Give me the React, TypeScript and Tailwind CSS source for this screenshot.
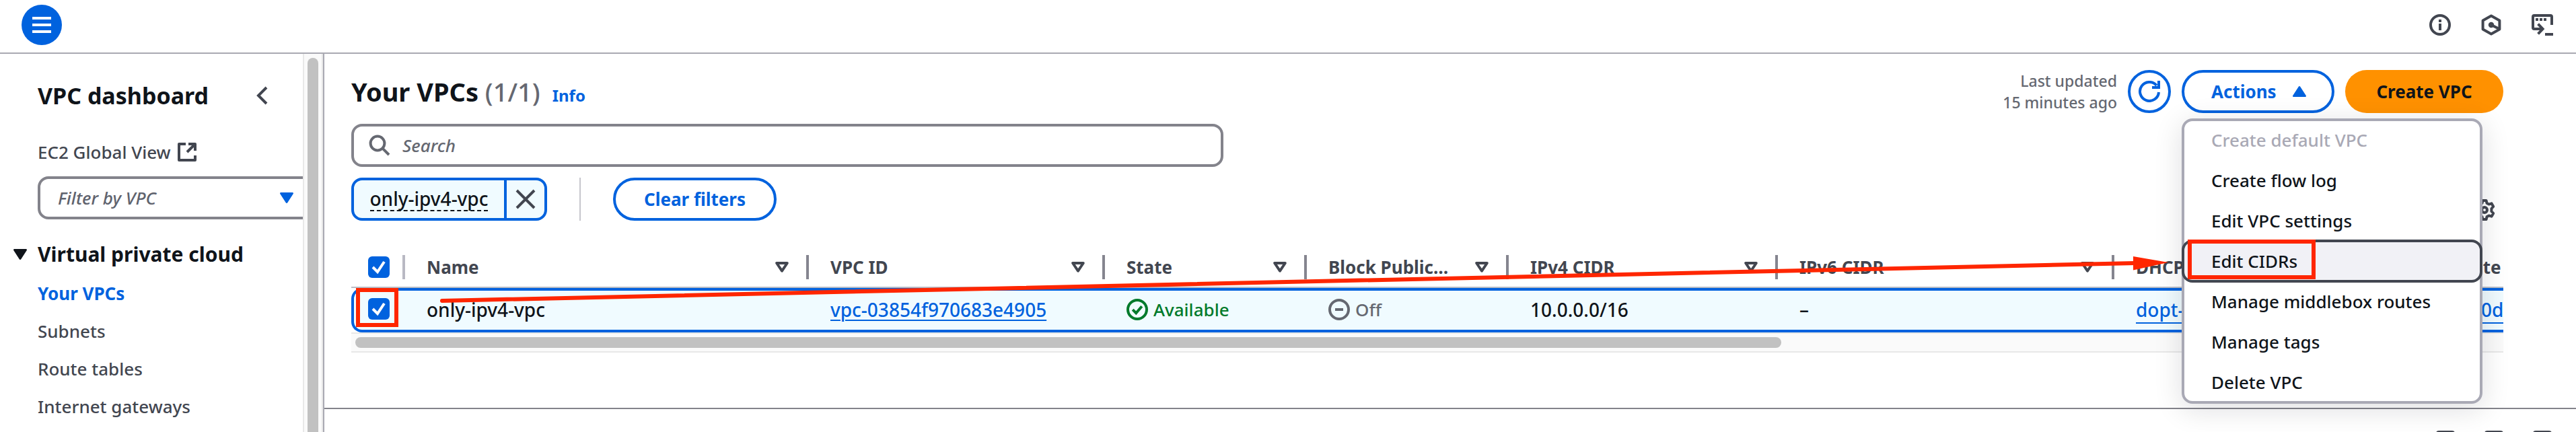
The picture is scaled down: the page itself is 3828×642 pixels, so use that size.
import type { ReactNode } from 'react';

const navItems = ['Your VPCs', 'Subnets', 'Route tables', 'Internet gateways'];

const menuItems = [
  'Create default VPC',
  'Create flow log',
  'Edit VPC settings',
  'Edit CIDRs',
  'Manage middlebox routes',
  'Manage tags',
  'Delete VPC',
];

const columns = ['Name', 'VPC ID', 'State', 'Block Public…', 'IPv4 CIDR', 'IPv6 CIDR', 'DHCP option set', 'Main route'];

function Icon({ children, className = 'size-8' }: { children: ReactNode; className?: string }) {
  return (
    <svg viewBox="0 0 16 16" fill="none" stroke="currentColor" strokeWidth="2" className={`shrink-0 ${className}`} aria-hidden="true">
      {children}
    </svg>
  );
}

function CaretDown({ className }: { className: string }) {
  return (
    <svg viewBox="0 0 20 16" className={`h-4 w-5 shrink-0 ${className}`} fill="currentColor" aria-hidden="true">
      <path d="M1.5 0h17c1.3 0 1.9 1.3 1.1 2.3l-8.4 13c-.6.9-1.8.9-2.4 0L.4 2.3C-.4 1.3 .2 0 1.5 0z" />
    </svg>
  );
}

function SortIcon() {
  return (
    <svg viewBox="0 0 20 16" className="h-4 w-5 shrink-0" fill="none" stroke="#424650" strokeWidth="4" strokeLinejoin="round" aria-hidden="true">
      <path d="M2.2 2h15.6L10 13.6z" />
    </svg>
  );
}

function CheckBox({ label }: { label: string }) {
  return (
    <label className="relative block size-8">
      <input
        type="checkbox"
        defaultChecked
        aria-label={label}
        className="block size-8 appearance-none rounded-md bg-[#0062de]"
      />
      <svg viewBox="0 0 32 32" className="pointer-events-none absolute inset-0 size-8" fill="none" stroke="#fff" strokeWidth="4" aria-hidden="true">
        <path d="M7 16l7 7L24 8" />
      </svg>
    </label>
  );
}

function TopBar() {
  return (
    <header className="flex h-20 shrink-0 items-center justify-between border-b-2 border-[#a9a9b2] pr-[34px] pb-1 pl-8">
      <button type="button" aria-label="Open navigation" className="flex size-15 flex-col items-center justify-center gap-1.5 rounded-full bg-[#0062de]">
        <span className="h-1 w-7 bg-white" />
        <span className="h-1 w-7 bg-white" />
        <span className="h-1 w-7 bg-white" />
      </button>
      <div className="flex gap-11 text-[#424650]">
        <button type="button" aria-label="Info">
          <Icon>
            <circle cx="8" cy="8" r="7" />
            <path d="M8 4v2M8 7v5" />
          </Icon>
        </button>
        <button type="button" aria-label="Diagnostics">
          <Icon>
            <path d="M8 1.3l6.2 3.4v6.6L8 14.7l-6.2-3.4V4.7z" strokeLinejoin="round" />
            <circle cx="8" cy="8" r="1.1" />
            <path d="M8 8l6 3" />
          </Icon>
        </button>
        <button type="button" aria-label="CloudShell">
          <Icon>
            <path d="M15 8V2c0-.6-.4-1-1-1H2c-.6 0-1 .4-1 1v8c0 .6.4 1 1 1h6M4.8 7.3L8.3 11l-3.5 3.7M10 15h6" />
            <path d="M3 4h2M6 4h2M9 4h2" />
          </Icon>
        </button>
      </div>
    </header>
  );
}

function Sidebar() {
  return (
    <aside className="flex w-[482px] shrink-0 border-r-2 border-[#a9a9b2]">
      <div className="min-w-0 flex-1 overflow-hidden pl-14">
        <div className="mt-10 flex h-11 items-center justify-between pr-11">
          <h2 className="text-[34px] leading-11 font-bold text-[#0f141a]">VPC dashboard</h2>
          <button type="button" aria-label="Close navigation" className="text-[#424650]">
            <Icon>
              <path d="M11 2L5 8l6 6" />
            </Icon>
          </button>
        </div>
        <a href="#ec2" className="mt-[42px] flex h-10 items-center gap-2 text-[#424650]">
          EC2 Global View
          <Icon>
            <path d="M7 2H2v12h12v-3.5M9 2h5v5M14 2L8 8" strokeLinejoin="round" />
          </Icon>
        </a>
        <button type="button" className="mt-4 flex h-16 w-[440px] items-center justify-between rounded-2xl border-4 border-[#83838b] pr-14 pl-[26px]">
          <span className="text-[#5f636e] italic">Filter by VPC</span>
          <CaretDown className="text-[#0062de]" />
        </button>
        <div className="mt-[30px] -ml-9 flex h-11 items-center gap-4">
          <CaretDown className="text-[#0f141a]" />
          <h3 className="text-[30px] leading-11 font-bold text-[#0f141a]">Virtual private cloud</h3>
        </div>
        <nav className="mt-2 flex flex-col">
          {navItems.map((item, i) => (
            <a
              key={item}
              href={`#${i}`}
              className={i === 0 ? 'leading-14 font-bold text-[#0062de]' : 'leading-14 text-[#424650]'}
            >
              {item}
            </a>
          ))}
        </nav>
      </div>
      <div className="flex w-[30px] flex-col items-center border-x-2 border-[#e8e8e8] bg-[#fafafa] pt-1.5">
        <div className="w-4 flex-1 rounded-t-full bg-[#c1c1c1]" />
      </div>
    </aside>
  );
}

function ActionsMenu() {
  return (
    <ul
      role="menu"
      className="absolute top-18 left-0 z-20 flex w-[447px] flex-col rounded-2xl bg-white shadow-[0_8px_40px_2px_rgba(0,7,22,0.12)] outline-4 -outline-offset-4 outline-[#a9a9b5]"
    >
      {menuItems.map((item, i) => (
        <li key={item} role="none" className={i === 0 ? '' : '-mt-1'}>
          <button
            type="button"
            role="menuitem"
            disabled={i === 0}
            className={
              i === 3
                ? 'relative z-10 block h-16 w-full rounded-2xl border-4 border-[#424650] bg-[#f1f1f6] pl-10 text-left text-[#0f141a]'
                : 'block h-16 w-full border-4 border-transparent pl-10 text-left text-[#0f141a] disabled:text-[#a9a9b5]'
            }
          >
            {item}
            {i === 3 && <span className="absolute -top-1 left-[5px] h-[59px] w-[190px] border-[6px] border-[#ff2600]" />}
          </button>
        </li>
      ))}
    </ul>
  );
}

function PageHeader() {
  return (
    <div className="flex h-16 items-center justify-between">
      <div className="flex items-baseline">
        <h1 className="text-[38px] leading-12 font-bold text-[#0f141a]">
          Your VPCs <span className="font-medium text-[#656871]">(1/1)</span>
        </h1>
        <a href="#info" className="ml-[18px] text-[24px] font-bold text-[#0062de]">Info</a>
      </div>
      <div className="flex items-center gap-4">
        <p className="text-right text-[23px] leading-8 text-[#656871]">
          Last updated
          <br />
          15 minutes ago
        </p>
        <button type="button" aria-label="Refresh" className="flex size-16 items-center justify-center rounded-full border-4 border-[#0062de] text-[#0062de]">
          <Icon>
            <path d="M15 8.5A7 7 0 1 1 13.4 3.5M10 5h5V0" />
          </Icon>
        </button>
        <div className="relative">
          <button type="button" aria-haspopup="menu" aria-expanded="true" className="flex h-16 w-[227px] items-center justify-between rounded-full border-4 border-[#0062de] pr-[38px] pl-10 font-bold text-[#0062de]">
            Actions
            <CaretDown className="rotate-180" />
          </button>
          <ActionsMenu />
        </div>
        <button type="button" className="h-16 w-[235px] rounded-full bg-[#ff9100] font-bold text-[#0f141a]">
          Create VPC
        </button>
      </div>
    </div>
  );
}

function Filters() {
  return (
    <div className="mt-4 flex items-end justify-between">
      <div className="flex flex-col gap-4">
        <label className="flex h-16 w-[1296px] items-center gap-[18px] rounded-2xl border-4 border-[#83838b] px-[22px] text-[#656871]">
          <Icon>
            <circle cx="6.5" cy="6.5" r="5.2" />
            <path d="M10.2 10.2L15 15" />
          </Icon>
          <input type="search" aria-label="Search" placeholder="Search" className="min-w-0 flex-1 outline-none placeholder:text-[#656871] placeholder:italic" />
        </label>
        <div className="flex h-16">
          <div className="flex rounded-2xl border-4 border-[#0062de] bg-[#f0fbff]">
            <span className="flex w-[227px] items-center justify-center border-r-4 border-[#0062de] text-[#0f141a]">
              <button type="button" className="h-9 border-b-2 border-dashed border-[#0f141a] text-[28px] leading-8">only-ipv4-vpc</button>
            </span>
            <button type="button" aria-label="Remove filter" className="flex w-14 items-center justify-center text-[#424650]">
              <Icon>
                <path d="M1.5 1.5l13 13M14.5 1.5l-13 13" />
              </Icon>
            </button>
          </div>
          <div className="mx-12 w-0.5 bg-[#c6c6cd]" />
          <button type="button" className="w-[243px] rounded-full border-4 border-[#0062de] font-bold text-[#0062de]">
            Clear filters
          </button>
        </div>
      </div>
      <button type="button" aria-label="Preferences" className="mr-3 text-[#424650]">
        <Icon>
          <path
            d="M6.7 1h2.6l.5 2 1.5.8 2-.6 1.3 2.3L13.2 7v2l1.4 1.5-1.3 2.3-2-.6-1.5.8-.5 2H6.7l-.5-2-1.5-.8-2 .6-1.3-2.3L2.8 9V7L1.4 5.5l1.3-2.3 2 .6L6.2 3z"
            strokeLinejoin="round"
          />
          <circle cx="8" cy="8" r="2" />
        </Icon>
      </button>
    </div>
  );
}

function VpcTable() {
  const cell = 'h-[66px] border-y-4 border-[#0062de] bg-[#f0fbff] p-0 pb-0.5 pl-8 text-left whitespace-nowrap';
  return (
    <div className="relative mt-10">
      <div className="overflow-hidden">
        <table className="w-[3302px] table-fixed border-separate border-spacing-0">
          <colgroup>
            <col className="w-20" />
            <col className="w-[600px]" />
            <col className="w-[440px]" />
            <col className="w-[300px]" />
            <col className="w-[300px]" />
            <col className="w-[400px]" />
            <col className="w-[500px]" />
            <col className="w-[400px]" />
            <col className="w-[282px]" />
          </colgroup>
          <thead>
            <tr>
              <th className="h-15 border-b-2 border-[#b9bcc6] p-0 pl-[25px]">
                <div className="flex items-center justify-between">
                  <CheckBox label="Select all VPCs" />
                  <span className="h-9 w-1 bg-[#b9b9c3]" />
                </div>
              </th>
              {columns.map((name, i) => (
                <th key={name} className="h-15 border-b-2 border-[#b9bcc6] p-0 pl-8 text-left font-bold whitespace-nowrap text-[#424650]">
                  <div className="flex items-center">
                    <span className="flex-1">{name}</span>
                    {i < 7 && (
                      <>
                        <SortIcon />
                        <span className="ml-[26px] h-9 w-1 bg-[#85858f]" />
                      </>
                    )}
                  </div>
                </th>
              ))}
            </tr>
          </thead>
          <tbody className="text-[28px] text-[#0f141a]">
            <tr>
              <td className="relative h-[66px] rounded-l-2xl border-y-4 border-l-4 border-[#0062de] bg-[#f0fbff] p-0 pb-1 pl-[21px]">
                <CheckBox label="Select only-ipv4-vpc" />
                <span className="absolute -top-1 left-[3px] h-[58px] w-[63px] border-[6px] border-[#ff2600]" />
              </td>
              <td className={cell}>only-ipv4-vpc</td>
              <td className={cell}>
                <a href="#vpc" className="text-[#0062de] underline decoration-2 underline-offset-4">vpc-03854f970683e4905</a>
              </td>
              <td className={cell}>
                <span className="flex items-center gap-2 text-[26px] text-[#007a2b]">
                  <Icon>
                    <circle cx="8" cy="8" r="7" />
                    <path d="M4.6 8.1l2.5 2.5 4.3-5" />
                  </Icon>
                  Available
                </span>
              </td>
              <td className={cell}>
                <span className="flex items-center gap-2 text-[26px] text-[#656871]">
                  <Icon>
                    <circle cx="8" cy="8" r="7" />
                    <path d="M5 8h6" />
                  </Icon>
                  Off
                </span>
              </td>
              <td className={cell}>10.0.0.0/16</td>
              <td className={cell}>–</td>
              <td className={cell}>
                <a href="#dopt" className="text-[#0062de] underline decoration-2 underline-offset-8">dopt-0a41c7e2</a>
              </td>
              <td className={cell}>
                <a href="#rtb" className="text-[#0062de] underline decoration-2 underline-offset-8">rtb-08e20d</a>
              </td>
            </tr>
          </tbody>
        </table>
      </div>
      <div className="flex h-[30px] items-center border-y-2 border-[#e8e8e8] bg-[#fafafa] px-1.5">
        <div className="h-4 w-[2119px] rounded-full bg-[#c1c1c1]" />
      </div>
      <svg viewBox="0 0 2569 70" preserveAspectRatio="none" className="pointer-events-none absolute top-[13px] left-[131px] z-30 h-[70px] w-[2569px]" aria-hidden="true">
        <path d="M4 66L2520 10" stroke="#ff2600" strokeWidth="6" strokeLinecap="round" />
        <path d="M2517 0v20.500L2569 9z" fill="#ff2600" />
      </svg>
    </div>
  );
}

function SplitPanel() {
  return (
    <section className="mt-auto flex h-9 shrink-0 justify-end gap-11 overflow-hidden border-t-2 border-[#83838b] pt-8 pr-9">
      {['Panel at bottom', 'Panel at side', 'Full panel'].map((label) => (
        <button key={label} type="button" aria-label={label} className="size-7 rounded border-4 border-[#424650]" />
      ))}
    </section>
  );
}

export default function App() {
  return (
    <div className="flex h-screen flex-col overflow-hidden bg-white font-['Noto_Sans','Open_Sans',sans-serif] text-[26px] leading-9 font-medium">
      <TopBar />
      <div className="flex min-h-0 flex-1">
        <Sidebar />
        <main className="flex min-w-0 flex-1 flex-col">
          <div className="pt-6 pr-[108px] pl-10">
            <PageHeader />
            <Filters />
            <VpcTable />
          </div>
          <SplitPanel />
        </main>
      </div>
    </div>
  );
}
